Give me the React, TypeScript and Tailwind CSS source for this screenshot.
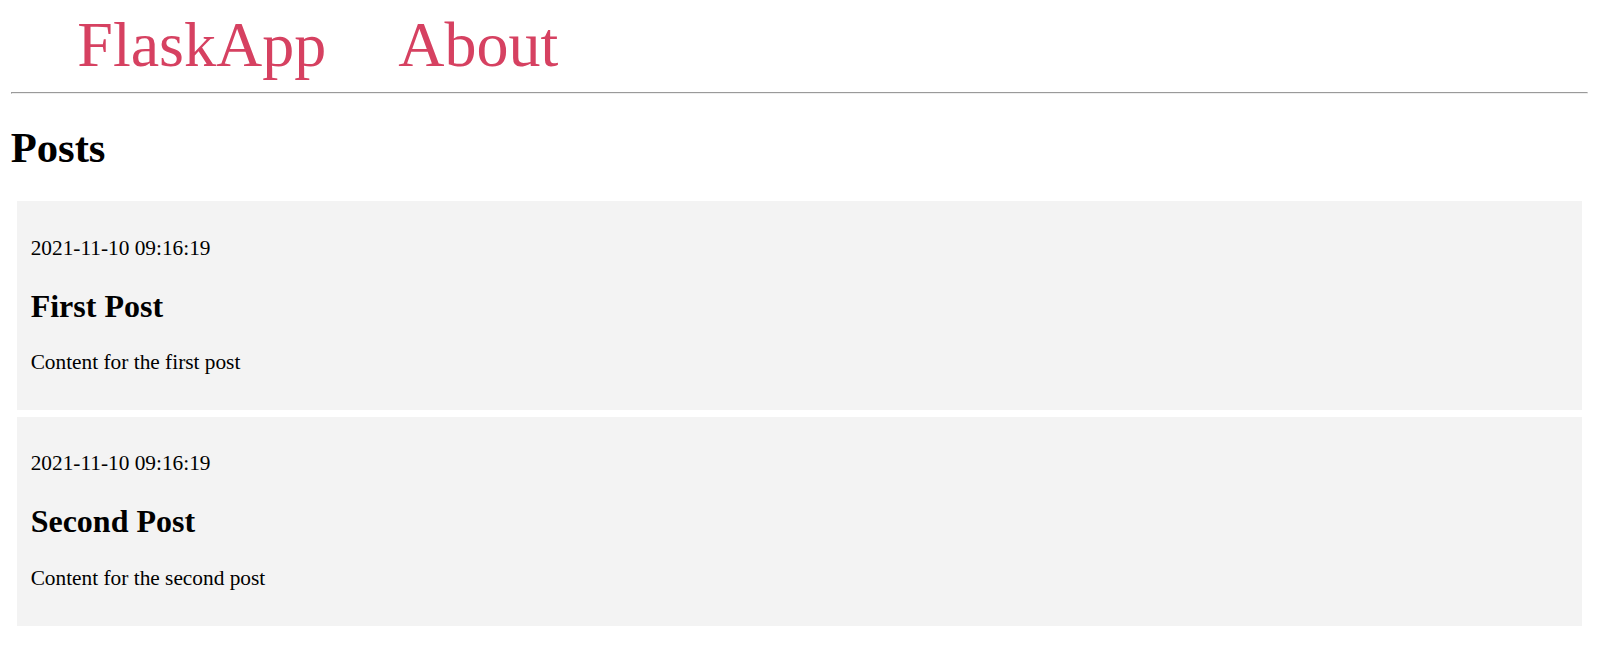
const posts = [
  { created: "2021-11-10 09:16:19", title: "First Post", content: "Content for the first post" },
  { created: "2021-11-10 09:16:19", title: "Second Post", content: "Content for the second post" },
];

export default function App() {
  return (
    <div className="mx-[10.67px] mt-[7.67px] mb-[10.67px] font-['Liberation_Serif',serif] text-[21.33px] text-black">
      <nav className="leading-[1.15]">
        <a href="#" className="ml-[66.67px] text-[64px] text-[#d64161] no-underline">
          FlaskApp
        </a>{" "}
        <a href="#" className="ml-[66.67px] text-[64px] text-[#d64161] no-underline">
          About
        </a>
      </nav>
      <hr className="my-[10.67px] h-px border border-t-[#9a9a9a] border-l-[#9a9a9a] border-b-[#eeeeee] border-r-[#eeeeee]" />
      <div>
        <h1 className="mt-[28.6px] mb-[29.6px] text-[42.67px] font-bold leading-[1.15]">Posts</h1>
        {posts.map((post, i) => (
          <div
            key={i}
            className={`mx-[6.67px] ${i === 0 ? "mt-[29.6px]" : "mt-[6.67px]"} bg-[#f3f3f3] p-[13.33px]`}
          >
            <p className="my-[21.33px] leading-[1.18]">{post.created}</p>
            <h2 className="my-[26.56px] text-[32px] font-bold leading-[1.13]">{post.title}</h2>
            <p className="my-[21.33px] leading-[1.18]">{post.content}</p>
          </div>
        ))}
      </div>
    </div>
  );
}
